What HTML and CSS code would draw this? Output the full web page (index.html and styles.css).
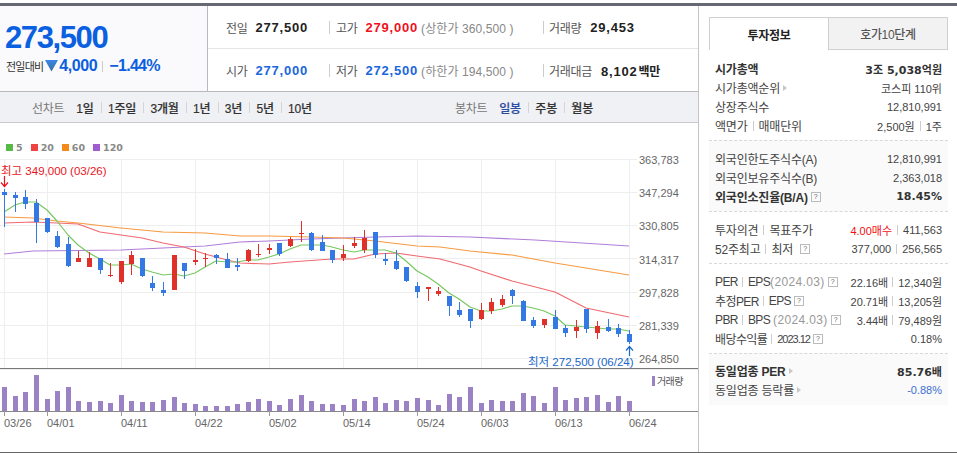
FILE: index.html
```html
<!DOCTYPE html>
<html lang="ko">
<head>
<meta charset="utf-8">
<title>차트</title>
<link rel="stylesheet" href="styles.css">
</head>
<body>
<div class="page">
  <div class="topbar"></div>
  <div class="layout">
    <main class="main">
      <section class="quote">
        <div class="now">
          <div class="price">273,500</div>
          <div class="change">
            <span class="change-label">전일대비</span>
            <svg class="down" width="13" height="13" viewBox="0 0 13 13"><defs><linearGradient id="dg" x1="0" y1="0" x2="0" y2="1"><stop offset="0" stop-color="#3a86e8"/><stop offset="1" stop-color="#3d6d9e"/></linearGradient></defs><path d="M0 1h13L6.500 12.500z" fill="url(#dg)"/></svg>
            <span class="change-val">4,000</span>
            <span class="vbar"></span>
            <span class="change-pct">−1.44%</span>
          </div>
        </div>
        <div class="facts">
          <div class="facts-row">
            <div class="cell c1"><span class="lab">전일</span><span class="val">277,500</span></div>
            <div class="cell c2"><span class="lab">고가</span><span class="val red">279,000</span><span class="lim">(상한가 360,500 )</span></div>
            <div class="cell c3"><span class="lab">거래량</span><span class="val">29,453</span></div>
          </div>
          <div class="facts-row">
            <div class="cell c1"><span class="lab">시가</span><span class="val blue">277,000</span></div>
            <div class="cell c2"><span class="lab">저가</span><span class="val blue">272,500</span><span class="lim">(하한가 194,500 )</span></div>
            <div class="cell c3"><span class="lab">거래대금</span><span class="val">8,102<span class="unit">백만</span></span></div>
          </div>
        </div>
      </section>
      <nav class="toolbar">
        <div class="tgroup left">
          <span class="tlabel">선차트</span>
          <a class="tbtn">1일</a><a class="tbtn">1주일</a><a class="tbtn">3개월</a><a class="tbtn">1년</a><a class="tbtn">3년</a><a class="tbtn">5년</a><a class="tbtn">10년</a>
        </div>
        <div class="tgroup right">
          <span class="tlabel">봉차트</span>
          <a class="tbtn on">일봉</a><a class="tbtn">주봉</a><a class="tbtn">월봉</a>
        </div>
      </nav>
      <div class="legend">
        <span class="lg"><i class="sw g"></i>5</span>
        <span class="lg"><i class="sw r"></i>20</span>
        <span class="lg"><i class="sw o"></i>60</span>
        <span class="lg"><i class="sw p"></i>120</span>
      </div>
      <svg class="chart" width="698" height="294" viewBox="0 158 698 294">
        <path class="grid" d="M0 159.500H637M0 192.500H637M0 225.500H637M0 258.500H637M0 292.500H637M0 325.500H637M0 358.500H637M47.500 159V368M121.500 159V368M195.500 159V368M269.500 159V368M343.500 159V368M417.500 159V368M481.500 159V368M555.500 159V368M629.500 159V368M4.500 159V368"/>
        <path class="ma purple" d="M4 254L33 251L121 250L163 248L205 246L240 242L269 241L311 239L343 238L375 237L417 236L470 237L535 240L629 246"/>
        <path class="ma orange" d="M4 217L33 218L57 221L78 223L121 228L163 232L205 233L240 236L269 236L311 237L343 238L375 241L417 246L440 247L470 251L512 255L555 263L629 275"/>
        <path class="ma red" d="M4 223L33 222L57 223L78 224L100 232L121 235L142 238L163 243L184 247L205 254L227 260L240 263L269 264L290 262L332 259L354 259L375 254L396 253L417 256L440 259L470 267L481 271L512 281L555 292L586 308L629 317"/>
        <path class="ma green" d="M4 212L15 205L25 202L36 202L47 210L57 221L68 235L78 245L89 253L100 259L110 265L121 265L131 264L142 269L152 272L163 275L174 274L184 276L195 273L205 267L216 261L227 262L237 262L248 260L258 260L269 257L279 254L290 249L301 245L311 245L322 245L332 247L343 250L354 252L364 250L375 250L385 250L396 253L406 261L417 271L428 277L438 284L449 293L459 299L470 307L481 311L491 311L502 309L512 306L523 306L533 308L544 311L555 316L565 325L576 326L586 327L597 328L608 329L618 329L629 331"/>
        <path class="wick-b" d="M4.500 189V227M15.500 192V212M25.500 190V209M36.500 199V243M47.500 218V233M57.500 231V248M68.500 237V267M100.500 258V274M142.500 258V277M152.500 276V291M163.500 282V296M184.500 263V279M216.500 254V264M227.500 253V268M237.500 258V271M279.500 243V256M311.500 232V251M322.500 235V251M332.500 250V263M375.500 232V258M385.500 253V265M396.500 250V270M406.500 267V282M417.500 282V298M449.500 296V316M459.500 302V317M470.500 309V328M512.500 289V304M523.500 300V321M533.500 317V328M555.500 310V329M565.500 325V337M586.500 309V333M608.500 319V332M618.500 324V337M629.500 330V344"/>
        <path class="body-b" d="M2 192h5v3h-5zM13 195h5v3h-5zM23 197h5v7h-5zM34 203h5v19h-5zM45 218h5v14h-5zM55 236h5v11h-5zM66 244h5v22h-5zM98 258h5v12h-5zM140 258h5v18h-5zM150 283h5v5h-5zM161 290h5v3h-5zM182 263h5v8h-5zM214 255h5v3h-5zM225 259h5v9h-5zM235 265h5v2h-5zM277 243h5v11h-5zM309 233h5v17h-5zM320 242h5v9h-5zM330 250h5v10h-5zM373 232h5v23h-5zM383 259h5v2h-5zM394 261h5v8h-5zM404 267h5v14h-5zM415 286h5v6h-5zM447 296h5v10h-5zM457 310h5v5h-5zM468 309h5v12h-5zM510 290h5v6h-5zM521 301h5v20h-5zM531 320h5v6h-5zM553 317h5v12h-5zM563 328h5v5h-5zM584 309h5v20h-5zM606 327h5v4h-5zM616 328h5v6h-5zM627 334h5v8h-5z"/>
        <path class="wick-r" d="M78.500 251V262M89.500 252V267M110.500 263V277M121.500 261V284M131.500 251V275M174.500 255V290M195.500 249V265M205.500 253V267M248.500 249V262M258.500 244V257M269.500 244V254M290.500 237V247M301.500 221V242M343.500 245V261M354.500 237V248M364.500 230V253M428.500 287V301M438.500 287V296M481.500 303V320M491.500 298V314M502.500 295V307M544.500 319V328M576.500 320V338M597.500 321V339"/>
        <path class="body-r" d="M76 258h5v4h-5zM87 258h5v9h-5zM108 275h5v1h-5zM119 261h5v21h-5zM129 255h5v9h-5zM172 255h5v35h-5zM193 260h5v2h-5zM203 258h5v1h-5zM246 250h5v11h-5zM256 254h5v1h-5zM267 248h5v2h-5zM288 239h5v7h-5zM299 233h5v1h-5zM341 254h5v4h-5zM352 243h5v3h-5zM362 238h5v12h-5zM426 287h5v2h-5zM436 291h5v3h-5zM479 310h5v9h-5zM489 302h5v9h-5zM500 299h5v6h-5zM542 319h5v6h-5zM574 327h5v4h-5zM595 326h5v7h-5z"/>
        <text class="note hi" x="1" y="175">최고 349,000 (03/26)</text>
        <path class="arrow-hi" d="M4.500 176V186M1 182.500L4.500 186.500L8 182.500"/>
        <text class="note lo" x="528" y="366">최저 272,500 (06/24)</text>
        <path class="arrow-lo" d="M629.500 356V347M626 350.500L629.500 346.500L633 350.500"/>
        <g class="ylab">
          <text x="639" y="164">363,783</text><text x="639" y="197">347,294</text><text x="639" y="230">330,805</text><text x="639" y="264">314,317</text><text x="639" y="297">297,828</text><text x="639" y="330">281,339</text><text x="639" y="363">264,850</text>
        </g>
        <path class="sep" d="M0 368.500H698"/>
        <path class="sep2" d="M0 369.500H698"/>
        <path class="vol" d="M2 387h5v24h-5zM13 396h5v15h-5zM23 392h5v19h-5zM34 375h5v36h-5zM45 399h5v12h-5zM55 391h5v20h-5zM66 387h5v24h-5zM76 401h5v10h-5zM87 402h5v9h-5zM98 401h5v10h-5zM108 403h5v8h-5zM119 395h5v16h-5zM129 401h5v10h-5zM140 402h5v9h-5zM150 402h5v9h-5zM161 400h5v11h-5zM172 397h5v14h-5zM182 403h5v8h-5zM193 404h5v7h-5zM203 406h5v5h-5zM214 406h5v5h-5zM225 406h5v5h-5zM235 404h5v7h-5zM246 402h5v9h-5zM256 399h5v12h-5zM267 401h5v10h-5zM277 405h5v6h-5zM288 399h5v12h-5zM299 395h5v16h-5zM309 401h5v10h-5zM320 404h5v7h-5zM330 404h5v7h-5zM341 405h5v6h-5zM352 399h5v12h-5zM362 401h5v10h-5zM373 397h5v14h-5zM383 403h5v8h-5zM394 400h5v11h-5zM404 401h5v10h-5zM415 398h5v13h-5zM426 400h5v11h-5zM436 405h5v6h-5zM447 394h5v17h-5zM457 397h5v14h-5zM468 387h5v24h-5zM479 403h5v8h-5zM489 400h5v11h-5zM500 401h5v10h-5zM510 401h5v10h-5zM521 393h5v18h-5zM531 396h5v15h-5zM542 403h5v8h-5zM553 387h5v24h-5zM563 400h5v11h-5zM574 398h5v13h-5zM584 397h5v14h-5zM595 395h5v16h-5zM606 402h5v9h-5zM616 396h5v15h-5zM627 401h5v10h-5z"/>
        <path class="axis" d="M0 411.500H698"/>
        <path class="tick" d="M4.500 411V416M47.500 411V416M121.500 411V416M195.500 411V416M269.500 411V416M343.500 411V416M417.500 411V416M481.500 411V416M555.500 411V416M629.500 411V416"/>
        <rect class="vol" x="652" y="376" width="3" height="10"/>
        <text class="vol-lab" x="657" y="385">거래량</text>
        <g class="xlab">
          <text x="4" y="427">03/26</text><text x="47" y="427">04/01</text><text x="121" y="427">04/11</text><text x="195" y="427">04/22</text><text x="269" y="427">05/02</text><text x="343" y="427">05/14</text><text x="417" y="427">05/24</text><text x="481" y="427">06/03</text><text x="555" y="427">06/13</text><text x="629" y="427">06/24</text>
        </g>
      </svg>
    </main>
    <aside class="side">
      <div class="tabs">
        <div class="tab active">투자정보</div>
        <div class="tab">호가10단계</div>
      </div>
      <div class="sec s1">
        <div class="row strong"><span>시가총액</span><span>3조 5,038억원</span></div>
        <div class="row"><span>시가총액순위<i class="caret"></i></span><span>코스피 110위</span></div>
        <div class="row"><span>상장주식수</span><span>12,810,991</span></div>
        <div class="row"><span>액면가<i class="d"></i>매매단위</span><span>2,500원<i class="d"></i>1주</span></div>
      </div>
      <div class="sec s2 tint">
        <div class="row"><span>외국인한도주식수(A)</span><span>12,810,991</span></div>
        <div class="row"><span>외국인보유주식수(B)</span><span>2,363,018</span></div>
        <div class="row strong"><span>외국인소진율(B/A)<i class="q">?</i></span><span>18.45%</span></div>
      </div>
      <div class="sec s3">
        <div class="row"><span>투자의견<i class="d"></i>목표주가</span><span><b class="buy">4.00매수</b><i class="d"></i>411,563</span></div>
        <div class="row"><span>52주최고<i class="d"></i>최저<i class="q wide">?</i></span><span>377,000<i class="d"></i>256,565</span></div>
      </div>
      <div class="sec s4">
        <div class="row"><span>PER<i class="d"></i>EPS<em>(2024.03)</em><i class="q">?</i></span><span>22.16배<i class="d"></i>12,340원</span></div>
        <div class="row"><span>추정PER<i class="d"></i>EPS<i class="q">?</i></span><span>20.71배<i class="d"></i>13,205원</span></div>
        <div class="row"><span>PBR<i class="d"></i>BPS<em class="gap">(2024.03)</em><i class="q">?</i></span><span>3.44배<i class="d"></i>79,489원</span></div>
        <div class="row"><span>배당수익률<i class="d"></i><small>2023.12</small><i class="q">?</i></span><span>0.18%</span></div>
      </div>
      <div class="sec s5 tint">
        <div class="row strong"><span>동일업종 PER<i class="caret"></i></span><span>85.76배</span></div>
        <div class="row"><span>동일업종 등락률<i class="caret"></i></span><span class="minus">-0.88%</span></div>
      </div>
    </aside>
  </div>
</div>
</body>
</html>
```

FILE: styles.css
```css
* { box-sizing: border-box; }
html, body { margin: 0; padding: 0; background: #fff; }
body { font-family: "Liberation Sans", "Noto Sans CJK KR", sans-serif; color: #333; overflow: hidden; }
.page { width: 957px; height: 453px; padding-top: 3px; display: flex; flex-direction: column; }
.topbar { height: 3px; background: #666873; flex: none; }
.layout { flex: 1; display: flex; border-bottom: 1px solid #666; min-height: 0; }
.main { width: 699px; flex: none; border-right: 1px solid #c4c4c4; display: flex; flex-direction: column; }

.quote { height: 86px; display: flex; border-bottom: 1px solid #b9b9bd; flex: none; }
.now { width: 208px; background: #fafafc; border-right: 1px solid #b9b9bd; padding: 14px 0 0 5px; flex: none; }
.price { font-size: 31px; line-height: 36px; font-weight: 700; color: #0a60e0; letter-spacing: -1.4px; }
.change { display: flex; align-items: center; height: 20px; }
.change-label { font-size: 11px; color: #333; letter-spacing: -.8px; margin: 0 2px 0 1px; }
.down { flex: none; margin-top: -1px; }
.change-val { font-size: 16px; font-weight: 700; color: #0a60e0; margin-left: 1px; letter-spacing: -.4px; }
.vbar { width: 1px; height: 11px; background: #ccc; margin: 0 6px 0 5px; }
.change-pct { font-size: 16px; font-weight: 700; color: #0a60e0; letter-spacing: -.7px; }

.facts { flex: 1; display: flex; flex-direction: column; }
.facts-row { flex: 1; display: flex; align-items: center; }
.facts-row + .facts-row { border-top: 1px solid #e6e6e6; }
.cell { display: flex; align-items: center; white-space: nowrap; }
.c1 { width: 121px; padding-left: 18px; }
.c2 { width: 214px; padding-left: 7px; }
.c3 { padding-left: 6px; }
.c2, .c3 { position: relative; }
.c2::before, .c3::before { content: ""; position: absolute; left: 0; top: 2px; bottom: 2px; width: 1px; background: #ccc; }
.lab { font-size: 12px; color: #555; letter-spacing: -.3px; }
.val { font-size: 13px; font-weight: 700; color: #222; margin-left: 8px; letter-spacing: .8px; }
.c3 .val { margin-left: 9px; }
.red { color: #f01020; }
.blue { color: #1a66dc; }
.lim { font-size: 12px; color: #888; margin-left: 3px; letter-spacing: .1px; }
.unit { font-size: 12px; margin-left: 1px; letter-spacing: -.3px; }

.toolbar { height: 31px; flex: none; background: #f0f1f5; border-bottom: 1px solid #c9c9cd; display: flex; align-items: center; font-size: 12px; }
.tgroup { display: flex; align-items: center; }
.left { padding-left: 32px; width: 455px; }
.tlabel { color: #777; margin-right: 12px; letter-spacing: -.3px; }
.tbtn { color: #333; font-weight: 500; padding: 0 7.200px; position: relative; letter-spacing: -.2px; -webkit-text-stroke: .2px #333; }
.tbtn + .tbtn::before { content: ""; position: absolute; left: 0; top: 3px; bottom: 3px; width: 1px; background: #d5d5d8; }
.tbtn:first-of-type { padding-left: 0; }
.tbtn.on { color: #2a4da0; -webkit-text-stroke: .2px #2a4da0; }

.legend { height: 35px; flex: none; padding: 19px 0 0 6px; display: flex; gap: 8px; font-family: "DejaVu Sans", sans-serif; font-size: 9.500px; font-weight: 700; color: #888; line-height: 11px; align-items: flex-start; }
.lg { display: flex; align-items: center; gap: 3px; }
.sw { width: 7px; height: 7px; display: block; }
.sw.g { background: #55bb44; }
.sw.r { background: #ee4444; }
.sw.o { background: #f58a1a; }
.sw.p { background: #a05cd0; }

.chart { display: block; flex: none; overflow: visible; }
.grid { stroke: #eeeeee; fill: none; stroke-width: 1; }
.ma { fill: none; stroke-width: 1.200; stroke-linejoin: round; }
.ma.green { stroke: #78c860; }
.ma.red { stroke: #f06a70; }
.ma.orange { stroke: #f79a40; }
.ma.purple { stroke: #b07ed8; }
.wick-b { stroke: #3478e4; fill: none; }
.body-b { fill: #3478e4; }
.wick-r { stroke: #e0302a; fill: none; }
.body-r { fill: #e0302a; }
.note { font-size: 11.500px; }
.note.hi { fill: #e8141c; }
.note.lo { fill: #1a66c8; }
.arrow-hi { stroke: #e8141c; fill: none; stroke-width: 1.200; }
.arrow-lo { stroke: #1a66c8; fill: none; stroke-width: 1.200; }
.ylab text, .xlab text { font-size: 11px; fill: #666; }
.sep { stroke: #777; }
.sep2 { stroke: #eee; }
.axis { stroke: #888; }
.tick { stroke: #999; }
.vol { fill: #9b82c4; }
.vol-lab { font-size: 10px; fill: #555; letter-spacing: -.6px; }

.side { flex: 1; padding: 11px 9px 0 10px; min-width: 0; font-size: 12px; }
.tabs { display: flex; height: 33px; }
.tab { flex: 1; display: flex; align-items: center; justify-content: center; background: #f2f2f2; border: 1px solid #d0d0d0; color: #555; font-size: 12px; font-weight: 500; letter-spacing: -.3px; }
.tab.active { background: #fff; border-bottom: 0; border-right: 0; color: #222; font-weight: 700; }
.sec { padding: 0 6px; }
.s1 { padding-top: 9px; padding-bottom: 5px; }
.s2 { padding-top: 8px; padding-bottom: 5px; }
.s3 { padding-top: 8px; padding-bottom: 5px; }
.s4 { padding-top: 8px; padding-bottom: 5px; }
.s5 { padding-top: 7px; padding-bottom: 6px; }
.sec + .sec { border-top: 1px dashed #d8d8d8; }
.tint { background: #fafafa; }
.s3, .s4 { background: #fff; }
.row { display: flex; justify-content: space-between; align-items: center; height: 19px; color: #444; letter-spacing: -.2px; white-space: nowrap; }
.row > span { display: flex; align-items: center; }
.row > span:last-child { font-size: 11px; letter-spacing: 0; }
.row.strong { font-weight: 700; color: #333; }
.row.strong > span:last-child { font-family: "DejaVu Sans", "Noto Sans CJK KR", sans-serif; font-size: 11px; }
.d { display: inline-block; width: 1px; height: 10px; background: #ccc; margin: 0 5px; }
.s4 .d { margin: 0 5px 0 4px; }
.s4 .row > span:first-child { letter-spacing: -.6px; }
.q { display: inline-flex; align-items: center; justify-content: center; width: 10px; height: 10px; border: 1px solid #bbb; font-size: 7px; font-style: normal; font-weight: 400; color: #666; margin-left: 3px; line-height: 1; letter-spacing: 0; }
.q.wide { margin-left: 7px; }
.caret { width: 0; height: 0; border: 3px solid transparent; border-left: 4px solid #c8c8c8; border-right: 0; margin-left: 3px; display: inline-block; }
.s4 .row em { font-style: normal; color: #999; letter-spacing: .35px; }
.s4 .row em.gap { margin-left: 3px; }
.s4 .row small { font-size: 11px; letter-spacing: -1px; }
.buy { font-weight: 400; color: #f01010; }
.minus { color: #3a70d0; }
```
